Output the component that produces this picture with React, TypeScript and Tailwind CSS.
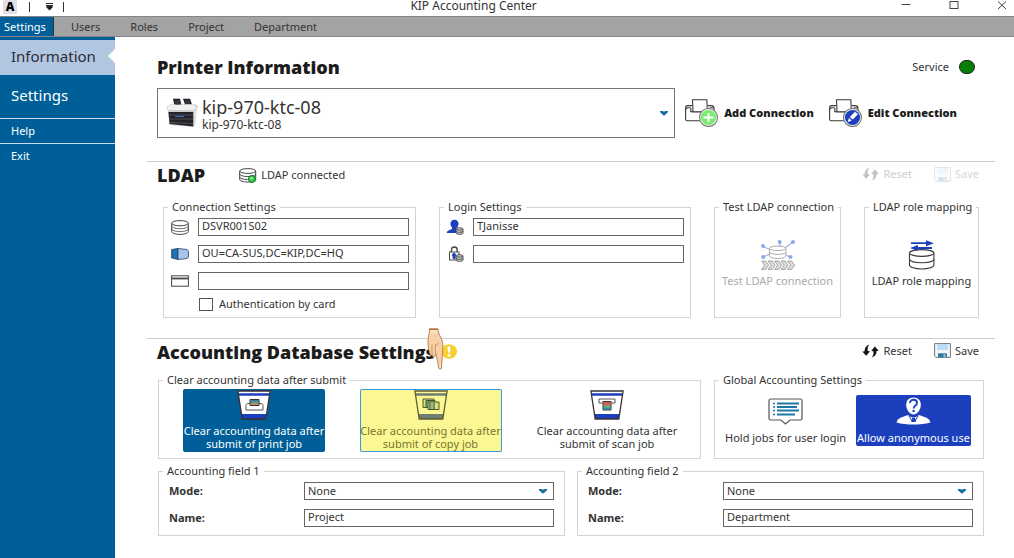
import React, { type ReactNode } from "react";

const BLUE = "#1c3fbd";

function Cylinder({ className = "h-[15px] w-[18px]" }: { className?: string }) {
  return (
    <svg viewBox="0 0 18 15" className={className} fill="#fff" stroke="#444" strokeWidth="1" aria-hidden="true">
      <path d="M.7 3.2v8.4c0 1.5 3.6 2.8 8.3 2.8s8.3-1.3 8.3-2.8V3.2" />
      <ellipse cx="9" cy="3.2" rx="8.3" ry="2.6" />
      <path d="M.7 6c0 1.500 3.600 2.700 8.300 2.700s8.300-1.200 8.300-2.700M.7 8.900c0 1.500 3.600 2.700 8.300 2.700s8.300-1.200 8.300-2.700" fill="none" strokeWidth=".8" />
    </svg>
  );
}

function ConnectedIcon() {
  return (
    <svg viewBox="0 0 18 15" className="h-[15px] w-[18px]" fill="#fff" stroke="#444" aria-hidden="true">
      <path d="M.7 3v8.500c0 1.400 3.600 2.500 8 2.500s8-1.100 8-2.500V3" />
      <ellipse cx="8.700" cy="3" rx="8" ry="2.400" />
      <path d="M.7 6c0 1.400 3.600 2.500 8 2.500s8-1.100 8-2.500M.7 9c0 1.400 3.600 2.500 8 2.500" fill="none" />
      <circle cx="13" cy="11" r="3.500" fill="#35d048" stroke="#14702a" />
      <circle cx="12.500" cy="10.300" r="1.300" fill="#8df59a" stroke="none" />
    </svg>
  );
}

function DomainIcon() {
  return (
    <svg viewBox="0 0 18 12" className="h-3 w-[18px]" stroke="#28415f" strokeWidth=".8" aria-hidden="true">
      <path d="M.6 1.500 7 .5v11L.6 10z" fill="#1874b8" />
      <path d="M7 .5 16 1.500 17.400 3v6.500L16 10.500 7 11.500z" fill="#a9c6ea" />
    </svg>
  );
}

function CardIcon() {
  return (
    <svg viewBox="0 0 18 12" className="h-3 w-[18px]" fill="#fff" stroke="#444" aria-hidden="true">
      <rect x=".6" y=".8" width="16.800" height="10.400" />
      <path d="M.6 3.500h16.800" strokeWidth="1.800" />
    </svg>
  );
}

function MiniDb() {
  return (
    <g fill="#ccc" stroke="#444" strokeWidth=".9">
      <path d="M10 10v4c0 .8 1.500 1.300 3.500 1.300S17 14.800 17 14v-4" />
      <ellipse cx="13.500" cy="9.900" rx="3.500" ry="1.200" />
      <path d="M10 12c0 .8 1.500 1.300 3.500 1.300S17 12.800 17 12" fill="none" />
    </g>
  );
}

function UserIcon() {
  return (
    <svg viewBox="0 0 18 16" className="h-4 w-[18px]" aria-hidden="true">
      <path d="M8.500.8c2.600 0 4 1.700 4 4 0 1.700-.8 3.100-1.800 3.900 0 1.400 1.600 1.700 3.300 2.300v3H.7c.2-2.200 1.500-2.600 3-3.100 1.500-.5 2.600-.8 2.600-2.200-1-.8-1.800-2.200-1.800-3.900 0-2.300 1.400-4 4-4z" fill={BLUE} />
      <MiniDb />
    </svg>
  );
}

function LockIcon() {
  return (
    <svg viewBox="0 0 18 16" className="h-4 w-[18px]" fill="none" stroke="#444" aria-hidden="true">
      <path d="M5.500 6V3.500C5.500 1.900 6.700 1 8.300 1s2.800.9 2.800 2.500V6" strokeWidth="1.400" />
      <rect x="3.500" y="6" width="9.500" height="8" fill="#fff" />
      <path d="M8 7.300a1.700 1.700 0 0 1 1 3v2H7v-2a1.700 1.700 0 0 1 1-3z" fill={BLUE} stroke={BLUE} />
      <MiniDb />
    </svg>
  );
}

function PrinterPhoto() {
  return (
    <svg viewBox="0 0 32 30" className="h-[30px] w-8 shrink-0" aria-hidden="true">
      <path d="M7 .8h7l1.500 6.400H8.500zM17 .8h7l2 5.600h-7z" fill="#1e1e22" />
      <path d="M1 8 5 6.300h24l3 1.400-1.500 5-1.500 14L27 29 3.500 27 2 13 .5 11z" fill="#cfcfd1" />
      <path d="M1 8.500 4 7h24l2 2-2.500 3H2z" fill="#f1f1f2" />
      <path d="M8.500 2h5l1 4.500H9.500zM18.500 2h4.500l1.500 4h-5z" fill="#35353b" />
      <path d="M2.500 14h25V28.500L3.500 26z" fill="#242327" />
      <path d="M2.500 17h24.500M3 21h24M3.500 24.500l23.500 1" stroke="#66666b" strokeWidth=".7" />
      <path d="M9 18.500h9" stroke="#3b6fd1" strokeWidth="1" />
      <path d="M27.500 12.500 31 9l-2 18-1.500 1.500z" fill="#dedee0" />
    </svg>
  );
}

function ConnectionIcon({ kind }: { kind: "add" | "edit" }) {
  return (
    <svg viewBox="0 0 34 28" className="h-7 w-[34px] shrink-0" fill="none" stroke="#3a3a3a" strokeWidth="1.100" aria-hidden="true">
      <path d="M7 6.600H3C1.500 6.600.6 7.500.6 9v11c0 1.200.7 1.800 1.800 1.800H17" />
      <path d="M5.900 13V10c0-.8-.5-1.200-1.200-1.200H3c-1.300 0-2.300.8-2.300 2" />
      <path d="M23 6.600h3c1.800 0 3 1 3 2.700V13M24.500 13v-3c0-.8.500-1.200 1.200-1.200H29" />
      <path d="M5.500 12.800H26" />
      <path d="M8 12.800 7.500.8h14.300l.6 12z" fill="#fff" />
      <circle cx="23.500" cy="18.500" r="9" fill="#f3f3f3" stroke="#777" />
      <circle cx="23.500" cy="18.500" r="7.600" fill={kind === "add" ? "#76ee70" : BLUE} stroke="none" />
      {kind === "add" ? (
        <path d="M23.500 14v9M18.500 18.500h10" stroke="#fff" strokeWidth="2.200" />
      ) : (
        <g stroke="none" fill="#fff">
          <path d="m20.800 18 5.200-5.300 3 2.600-5.200 5.200z" />
          <path d="m20 19 2.700 2.400-4.200 1.900z" />
        </g>
      )}
    </svg>
  );
}

function ResetIcon() {
  return (
    <svg viewBox="0 0 17 14" className="h-3.5 w-[17px]" fill="#111" aria-hidden="true">
      <path d="M7.500.5C5.800 2 5.400 4 5.700 7l2.300.2-3.800 4.600L.3 7.600l2.200-.2C2.500 4 4.300 1.200 7.500.5z" />
      <path d="M9.500 13.500c1.800-1.500 2.200-3.500 1.900-6.200l-2.200-.2 3.600-4.600 3.900 4.300-2.200.3c.2 3.300-1.700 5.800-5 6.400z" />
    </svg>
  );
}

function SaveIcon() {
  return (
    <svg viewBox="0 0 17 15" className="h-[15px] w-[17px]" aria-hidden="true">
      <path d="M.6.6h15.800v13.800H2L.6 13z" fill="#f1f5f8" stroke="#777" />
      <path d="M3.200 1h10.600v6H3.200z" fill="#b7dcf5" />
      <path d="M4 10.300h9v3.900H4z" fill="#2b7aa3" />
      <path d="M9.500 11.300h2v2.900h-2z" fill="#9fcbe0" />
    </svg>
  );
}

function TestIcon() {
  return (
    <svg viewBox="0 0 34 30" className="h-[30px] w-[34px]" fill="none" aria-hidden="true">
      <g stroke="#9db0e8" strokeWidth="1.100">
        <path d="M2 6.500 10 10M19 2v5M32 2l-8 6M2 17l7-3M29 17l-4-2" />
        <g fill="#8ea6ea" stroke="none">
          <circle cx="2" cy="6" r="2" /><circle cx="18.700" cy="2" r="2" /><circle cx="32" cy="2" r="2" />
          <circle cx="2.200" cy="17" r="2" /><circle cx="29.500" cy="17" r="2" />
        </g>
      </g>
      <g stroke="#aaa" fill="#fff">
        <path d="M8.500 8.500V16c0 1.300 3.600 2.500 8.200 2.500s8.200-1.200 8.200-2.500V8.500" />
        <ellipse cx="16.700" cy="8.300" rx="8.200" ry="2.300" />
        <path d="M8.500 12c0 1.300 3.600 2.400 8.200 2.400s8.200-1.100 8.200-2.400" fill="none" />
      </g>
      <g fill="#ddd" stroke="#909090" strokeWidth=".8">
        {[0, 6.500, 13, 19.500, 26].map((x) => (
          <path key={x} transform={`translate(${x} 0)`} d="M.6 21h4l3 4.200-3 4.200h-4l3-4.200z" />
        ))}
      </g>
    </svg>
  );
}

function RoleIcon() {
  return (
    <svg viewBox="0 0 28 30" className="h-[30px] w-7" fill="#fff" stroke="#3a3a3a" strokeWidth="1.100" aria-hidden="true">
      <path d="M1.500 13.500V25c0 2.200 5.500 4 12.200 4s12.200-1.800 12.200-4V13.500" />
      <ellipse cx="13.700" cy="13" rx="12.200" ry="3.400" />
      <path d="M1.500 19c0 2.200 5.500 3.700 12.200 3.700s12.200-1.500 12.200-3.700" fill="none" />
      <path d="M3 3.200h16M9 8h15" stroke={BLUE} strokeWidth="1.800" />
      <path d="m18 .2 8 3-8 3zM10 5 2 8l8 3z" fill={BLUE} stroke="none" />
    </svg>
  );
}

function BinIcon({ kind }: { kind: "print" | "copy" | "scan" }) {
  const copy = kind === "copy";
  const body = copy ? "#fbf894" : "#fff";
  const band = copy ? "#6e7f72" : BLUE;
  const line = copy ? "#5c5b35" : "#3a3030";
  return (
    <svg viewBox="0 0 34 30" className="h-[30px] w-[34px]" aria-hidden="true">
      <path d="M.9 1h32.200l-4 28H5.400z" fill={body} />
      <path d="M1.500 3.200h31l-.5 2.600H2z" fill={band} />
      <path d="M4.300 24h25.400l-.9 5H5.200z" fill={band} />
      <path d="M.9 1h32.200l-4.300 28H5.200z" fill="none" stroke={line} strokeWidth="1.300" />
      {kind === "print" && (
        <g>
          <path d="M9 15.500c0-1.500 1-2 2-2h13c1.500 0 2 .8 2 2V20H9z" fill="#fff" stroke="#555" />
          <path d="M13 9.500h9v6h-9z" fill="#4aa879" stroke="#333" />
          <path d="M13.500 10h8v1.500h-8z" fill="#4d77a0" />
          <path d="M13.500 13.500h8V15h-8z" fill="#e38067" />
        </g>
      )}
      {copy && (
        <g stroke="#4e542a" strokeWidth="1">
          <path d="M9 9h11v8.500H9z" fill="#d9df89" />
          <path d="M12 10.500h9v7h-9z" fill="#73b66b" />
          <path d="M14 12h11v7.500H14z" fill="#e6db76" />
          <path d="M16 12.500v6.500M20 12.500v6.500" stroke="#48a47a" strokeWidth="2" />
          <path d="M18 12.500v6.500" stroke="#d79553" strokeWidth="1.500" />
        </g>
      )}
      {kind === "scan" && (
        <g>
          <path d="M9 9h16v4H9z" fill="#fff" stroke="#555" />
          <path d="M13 11.500h8v8.500h-8z" fill="#60c07b" stroke="#333" />
          <path d="M13.500 12h7v3.500h-7z" fill="#e15758" />
          <path d="M13.500 17.500h7v2h-7z" fill="#398da8" />
        </g>
      )}
    </svg>
  );
}

function HoldIcon() {
  return (
    <svg viewBox="0 0 35 27" className="h-[27px] w-[35px]" aria-hidden="true">
      <path d="M1 3c0-1.500.8-2 2-2h29.500c1 0 1.500.8 1.500 2v17.500c0 1-.6 1.500-1.500 1.500H22l-4.500 4L13 22H2.500C1.500 22 1 21.500 1 20.500z" fill="#fff" stroke="#555" strokeWidth="1.200" />
      <path d="M9 5.500h22M9 9h20M9 12.500h22M9 16.500h18" stroke="#1c78a8" strokeWidth="2" />
      <path d="M5 5.500h2M5 9h2M5 12.500h2M5 16.500h2" stroke="#1c78a8" strokeWidth="1.600" />
    </svg>
  );
}

function AnonymousIcon() {
  return (
    <svg viewBox="0 0 35 28" className="h-7 w-[35px]" aria-hidden="true">
      <path d="M17.500.5c4.500 0 7.300 3 7.300 7.300 0 4.500-3 9.700-7.300 9.700s-7.300-5.200-7.300-9.700C10.200 3.500 13 .5 17.500.5z" fill="#fff" />
      <path d="M14 6c0-2 1.500-3.200 3.500-3.200S21 4 21 6c0 2.700-3.300 2.500-3.300 5.400" fill="none" stroke={BLUE} strokeWidth="1.900" />
      <circle cx="17.600" cy="14" r="1.200" fill={BLUE} />
      <path d="M12 18c1.500 1.500 3.500 2.300 5.500 2.300s4-.8 5.500-2.300l7 2.500c2.600 1 4 2.800 4.500 5-10 2.700-24 2.700-34 0 .5-2.200 1.900-4 4.500-5z" fill="#fff" />
      <path d="m13 19 3 5M22 19l-3 5" stroke={BLUE} strokeWidth="1" />
      <path d="M16.300 20.500h2.600l1 4.500h-4.600z" fill={BLUE} />
    </svg>
  );
}

function HandIcon() {
  return (
    <svg viewBox="0 0 20 42" className="h-[42px] w-5" aria-hidden="true">
      <path d="M2.500 1h8.300c.6 3 1.200 5.500 3.200 9 1.600 2.900 2 5.500 1.700 9.500-.2 6-.7 12-1.300 20.500-.2 1.500-2.300 1.500-2.700 0-.9-5-1.700-10.500-3-14.500-.4 2.200-.8 3.500-2 3.400-1 0-1.400-.8-1.400-2-.9.500-2 .2-2.300-1.200C.8 20 .6 14 1.300 9.500 1.700 6.500 2.700 4 2.500 1z" fill="#f8d0a6" stroke="#b07a50" strokeWidth=".9" />
      <path d="M8.700 25.500c-.4-4-.6-6-.2-9M5.300 26.500c-.5-4-.6-7-.2-10M11.500 15c-1 1.500-2 2-3 1.500" fill="none" stroke="#c98d61" strokeWidth=".9" />
      <path d="M3.500 2h6.500l.6 3.500H3z" fill="#fadfc1" />
      <path d="M12.300 36.500h1.800l-.4 3.300h-1z" fill="#fbe9dc" />
      <path d="M2 1.200h9" stroke="#b26634" strokeWidth="1.300" />
    </svg>
  );
}

function Chevron() {
  return (
    <svg viewBox="0 0 8 5" className="pointer-events-none h-[5px] w-2 shrink-0" aria-hidden="true">
      <path d="M0 0h2.500L4 .8 5.500 0H8v1.200L4 4.800 0 1.200z" fill="#136ca6" />
    </svg>
  );
}

function Group({ title, className = "", children }: { title: string; className?: string; children: ReactNode }) {
  return (
    <fieldset className={`min-w-0 border border-[#d4d4d4] ${className}`}>
      <legend className="ml-1 whitespace-nowrap px-1 leading-4">{title}</legend>
      {children}
    </fieldset>
  );
}

const textInput = "h-[18px] w-full min-w-0 border border-[#666] bg-white px-[3px] pb-[3px] leading-[13px]";

function IconField({ icon, label, value, type = "text" }: { icon: ReactNode; label: string; value?: string; type?: string }) {
  return (
    <label className="flex items-center gap-[9px]">
      <span className="flex w-[18px] shrink-0 justify-center">{icon}</span>
      <input type={type} aria-label={label} defaultValue={value} className={textInput} />
    </label>
  );
}

function ResetSave({ disabled = false }: { disabled?: boolean }) {
  return (
    <div className="flex items-center gap-[22px] pr-4 pb-0.5">
      <button type="button" disabled={disabled} className="flex items-center gap-1 disabled:opacity-25"><ResetIcon />Reset</button>
      <button type="button" disabled={disabled} className="flex items-center gap-1 disabled:opacity-20"><SaveIcon />Save</button>
    </div>
  );
}

function AccountingField({ n, name }: { n: number; name: string }) {
  return (
    <Group title={`Accounting field ${n}`} className="flex-1">
      <div className="grid grid-cols-[135px_1fr] items-center gap-y-[9px] pt-[3px] pr-2.5 pb-2 pl-2.5">
        <label htmlFor={`mode-${n}`} className="font-bold">Mode:</label>
        <div className="relative flex h-[18px] items-center border border-[#666]">
          <select id={`mode-${n}`} className="h-full w-full appearance-none bg-white px-[3px] leading-4">
            <option>None</option>
          </select>
          <span className="pointer-events-none absolute right-1.5"><Chevron /></span>
        </div>
        <label htmlFor={`name-${n}`} className="font-bold">Name:</label>
        <input id={`name-${n}`} defaultValue={name} className={textInput} />
      </div>
    </Group>
  );
}

const heading = "whitespace-nowrap font-['Open_Sans',sans-serif] text-[18px] leading-6 font-extrabold text-[#1c1c1c]";
const clearButton = "flex h-[63px] w-[142px] flex-col items-center rounded-xs pt-px leading-[13px]";

export default function App() {
  return (
    <div className="flex min-h-screen flex-col bg-white font-['Noto_Sans',sans-serif] text-[11px] leading-4 text-[#333]">
      <header className="grid h-4 grid-cols-[411fr_auto_478fr] items-start">
        <div className="flex items-center pl-[3px]">
          <span className="flex h-3.5 w-3.5 items-center justify-center bg-[#dfe1e7] text-[12px] leading-3 font-black text-black">A</span>
          <span className="ml-3 h-2.5 w-px bg-[#333]" />
          <svg viewBox="0 0 7 8" className="ml-4 h-2 w-[7px]" aria-hidden="true">
            <path d="M0 .5h7M0 2.500h7" stroke="#333" /><path d="M.5 3h6v1.500L3.500 7.500.5 4.500z" fill="#222" />
          </svg>
          <span className="ml-2.5 h-2.5 w-px bg-[#333]" />
        </div>
        <h1 className="whitespace-nowrap text-[12px] leading-3">KIP Accounting Center</h1>
        <div className="flex items-center justify-end gap-[38px] pr-[7px]">
          <button type="button" aria-label="Minimize">
            <svg viewBox="0 0 10 10" className="size-2.5" stroke="#444"><path d="M.5 4.500h9" /></svg>
          </button>
          <button type="button" aria-label="Maximize">
            <svg viewBox="0 0 10 10" className="size-2.5" stroke="#444" fill="none"><rect x="1" y="1.500" width="8" height="7" /></svg>
          </button>
          <button type="button" aria-label="Close">
            <svg viewBox="0 0 10 10" className="size-2.5" stroke="#444"><path d="m1 1.500 8 7.500M9 1.500 1 9" /></svg>
          </button>
        </div>
      </header>

      <nav className="flex h-[21px] items-stretch border-y border-[#858585] bg-[#a3a3a3]">
        <a href="#settings" className="flex w-[54px] items-center border-r border-[#333] bg-[#005f98] pl-1 text-white">Settings</a>
        <a href="#users" className="ml-[17px] flex items-center">Users</a>
        <a href="#roles" className="ml-[30px] flex items-center">Roles</a>
        <a href="#project" className="ml-[30px] flex items-center">Project</a>
        <a href="#department" className="ml-[30px] flex items-center">Department</a>
      </nav>

      <div className="flex flex-1">
        <aside className="w-[115px] shrink-0 bg-[#005f98] pt-[3px] text-white">
          <a href="#information" className="flex h-[35px] items-center justify-between bg-[#b1c6e1] pb-[3px] pl-[11px] text-[15px] text-[#2d2d38]">
            Information
            <svg viewBox="0 0 7 14" className="h-3.5 w-[7px]" aria-hidden="true"><path d="M7 0v14L0 7z" fill="#fff" /></svg>
          </a>
          <a href="#general" className="flex h-[43px] items-center pb-[3px] pl-[11px] text-[15px]">Settings</a>
          <a href="#help" className="flex h-[25px] items-center border-t border-[#c9dce8] pl-[11px]">Help</a>
          <a href="#exit" className="flex h-[25px] items-center border-t border-[#c9dce8] pl-[11px]">Exit</a>
        </aside>

        <main className="min-w-0 flex-1 pr-[19px] pl-8">
          <section className="pt-[18px] pb-[23px] pl-2.5">
            <div className="flex items-center justify-between pr-5">
              <h2 className={heading}>Printer Information</h2>
              <div className="flex items-center gap-2.5">
                Service
                <span className="h-3.5 w-4 rounded-full border border-[#222] bg-[#047f04]" />
              </div>
            </div>
            <div className="mt-[9px] flex items-center pr-[38px]">
              <div className="flex h-[50px] min-w-0 flex-1 items-center border border-[#777] pr-1.5 pl-2">
                <PrinterPhoto />
                <div className="ml-1 flex min-w-0 flex-1 flex-col pt-[3px]">
                  <select aria-label="Printer" className="appearance-none bg-transparent text-[18px] leading-5 text-[#333]">
                    <option>kip-970-ktc-08</option>
                  </select>
                  <span className="text-[12px] leading-4">kip-970-ktc-08</span>
                </div>
                <Chevron />
              </div>
              <button type="button" className="ml-2.5 flex items-center gap-[5px] font-['Open_Sans',sans-serif] font-extrabold whitespace-nowrap text-[#1c1c1c]"><ConnectionIcon kind="add" />Add Connection</button>
              <button type="button" className="ml-[15px] flex items-center gap-[5px] font-['Open_Sans',sans-serif] font-extrabold whitespace-nowrap text-[#1c1c1c]"><ConnectionIcon kind="edit" />Edit Connection</button>
            </div>
          </section>

          <section className="border-t border-[#ccc] pb-5">
            <div className="flex h-[26px] items-center pl-2.5">
              <h2 className={heading}>LDAP</h2>
              <div className="ml-[34px] flex flex-1 items-center gap-1"><ConnectedIcon />LDAP connected</div>
              <ResetSave disabled />
            </div>
            <div className="mt-[11px] grid grid-cols-[253fr_252fr_127fr_115fr] gap-[23px] pr-4 pl-4">
              <Group title="Connection Settings" className="h-[119px]">
                <div className="flex flex-col gap-[9px] pt-[3px] pr-1.5 pl-[7px]">
                  <IconField icon={<Cylinder />} label="Server" value="DSVR001S02" />
                  <IconField icon={<DomainIcon />} label="Domain" value="OU=CA-SUS,DC=KIP,DC=HQ" />
                  <IconField icon={<CardIcon />} label="Card" />
                  <label className="-mt-[3px] ml-7 flex items-center gap-1.5">
                    <input type="checkbox" className="h-[13px] w-3.5 appearance-none border border-[#555] bg-white checked:bg-[#005f98]" />
                    Authentication by card
                  </label>
                </div>
              </Group>
              <Group title="Login Settings">
                <div className="flex flex-col gap-[9px] pt-[3px] pr-1.5 pl-1.5">
                  <IconField icon={<UserIcon />} label="User name" value="TJanisse" />
                  <IconField icon={<LockIcon />} label="Password" type="password" />
                </div>
              </Group>
              <Group title="Test LDAP connection">
                <button type="button" disabled className="mt-[25px] flex w-full flex-col items-center gap-[3px] whitespace-nowrap text-[#aaa]"><TestIcon />Test LDAP connection</button>
              </Group>
              <Group title="LDAP role mapping">
                <button type="button" className="mt-[25px] flex w-full flex-col items-center gap-[3px] whitespace-nowrap"><RoleIcon />LDAP role mapping</button>
              </Group>
            </div>
          </section>

          <section className="border-t border-[#ccc]">
            <div className="flex h-[25px] items-center justify-between pl-2.5">
              <div className="flex items-center">
                <h2 className={heading}>Accounting Database Settings</h2>
                <div className="relative ml-1.5">
                  <svg viewBox="0 0 16 15" className="h-[15px] w-4" aria-label="Warning">
                    <ellipse cx="8" cy="7.500" rx="8" ry="7.300" fill="#f7cf2d" />
                    <path d="M6.500 2.500h3L9 8.800H7z" fill="#fff" /><circle cx="8" cy="11.300" r="1.500" fill="#fff" />
                  </svg>
                  <span className="pointer-events-none absolute -top-4 -left-3.5"><HandIcon /></span>
                </div>
              </div>
              <ResetSave />
            </div>
            <div className="flex flex-col gap-1 pt-2 pr-[11px] pl-[11px]">
              <div className="grid grid-cols-[543fr_270fr] gap-[13px]">
                <Group title="Clear accounting data after submit" className="h-[87px]">
                  <div className="flex items-start justify-between pt-px pr-[22px] pl-6">
                    <button type="button" className={`${clearButton} bg-[#005f98] text-white`}><BinIcon kind="print" /><span className="mt-1">Clear accounting data after submit of print job</span></button>
                    <button type="button" className={`${clearButton} bg-[#fbf894] text-[#77752f] ring-1 ring-[#3b98e8] ring-inset`}><BinIcon kind="copy" /><span className="mt-1">Clear accounting data after submit of copy job</span></button>
                    <button type="button" className={clearButton}><BinIcon kind="scan" /><span className="mt-1">Clear accounting data after submit of scan job</span></button>
                  </div>
                </Group>
                <Group title="Global Accounting Settings">
                  <div className="flex items-start justify-between pt-[7px] pr-3 pl-2.5 whitespace-nowrap">
                    <button type="button" className="flex h-[51px] flex-col items-center justify-between pt-[3px]"><HoldIcon />Hold jobs for user login</button>
                    <button type="button" className="flex h-[51px] w-[115px] flex-col items-center justify-between rounded-xs bg-[#1c3fbd] pt-0.5 text-white"><AnonymousIcon />Allow anonymous use</button>
                  </div>
                </Group>
              </div>
              <div className="flex gap-3">
                <AccountingField n={1} name="Project" />
                <AccountingField n={2} name="Department" />
              </div>
            </div>
          </section>
        </main>
      </div>
    </div>
  );
}
